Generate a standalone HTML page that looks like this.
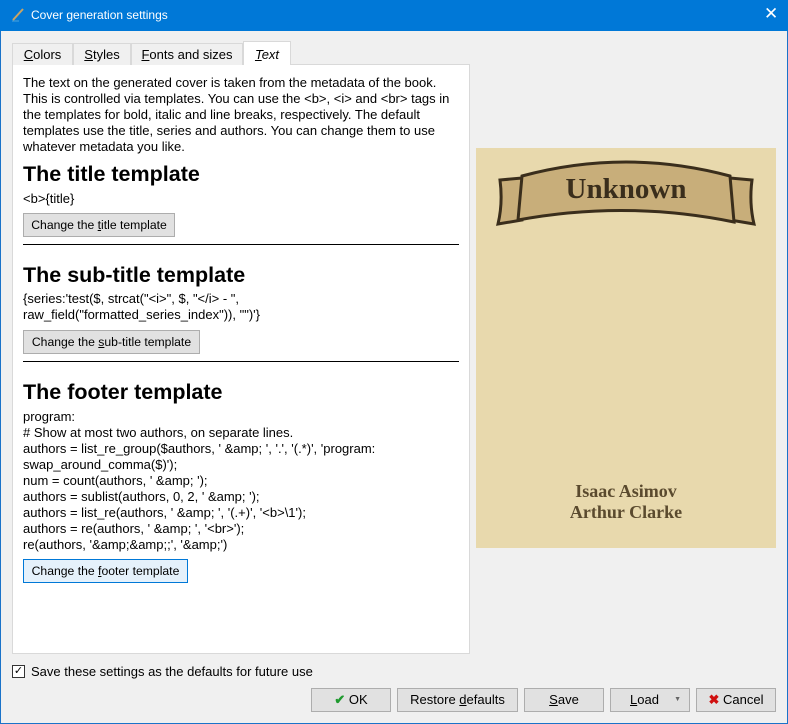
<!DOCTYPE html>
<html><head><meta charset="utf-8"><style>
*{margin:0;padding:0;box-sizing:border-box}
body{width:788px;height:724px;background:#f0f0f0;font-family:"Liberation Sans",sans-serif;font-size:12px;color:#000;position:relative;overflow:hidden}
.win{position:absolute;left:0;top:0;width:788px;height:724px;border:1px solid #1a73c9}
.title{position:absolute;left:0;top:0;width:788px;height:31px;background:#0078d7;color:#fff;font-size:12px}
.a{position:absolute;white-space:nowrap}
.l{position:absolute;left:23px;white-space:nowrap;line-height:16px;font-size:13px}
.h{position:absolute;left:23px;font-weight:bold;font-size:21.5px;white-space:nowrap;line-height:24px}
.btn{position:absolute;height:24px;border:1px solid #adadad;background:#e1e1e1;text-align:center;line-height:22px;font-size:13px;white-space:nowrap}
.cb{font-size:12.2px}
.tab{position:absolute;top:43px;height:22px;border:1px solid #d9d9d9;border-bottom:none;background:#f0f0f0;text-align:center;line-height:22px;font-size:13px}
.hr{position:absolute;left:23px;width:436px;height:1px;background:#000}
</style></head><body>
<div class="win"></div>
<div class="title">
<svg class="a" style="left:10px;top:7px" width="16" height="16"><line x1="3" y1="13" x2="13" y2="2" stroke="#c9a464" stroke-width="2"/><line x1="2" y1="14" x2="9" y2="14" stroke="#4aa3df" stroke-width="1"/></svg>
<div class="a" style="left:31px;top:8px">Cover generation settings</div>
<div class="a" style="left:764px;top:4px;font-size:17px">✕</div>
</div>
<div class="a" style="left:12px;top:64px;width:458px;height:590px;border:1px solid #d9d9d9;background:#fff"></div>
<div class="tab" style="left:12px;width:61px"><u>C</u>olors</div>
<div class="tab" style="left:73px;width:58px"><u>S</u>tyles</div>
<div class="tab" style="left:131px;width:112px"><u>F</u>onts and sizes</div>
<div class="tab" style="left:243px;top:41px;height:24px;width:48px;background:#fff;font-style:italic;line-height:26px"><u>T</u>ext</div>

<div class="l" style="top:75px">The text on the generated cover is taken from the metadata of the book.</div>
<div class="l" style="top:91px">This is controlled via templates. You can use the &lt;b&gt;, &lt;i&gt; and &lt;br&gt; tags in</div>
<div class="l" style="top:107px">the templates for bold, italic and line breaks, respectively. The default</div>
<div class="l" style="top:123px">templates use the title, series and authors. You can change them to use</div>
<div class="l" style="top:139px">whatever metadata you like.</div>
<div class="h" style="top:162px">The title template</div>
<div class="l" style="top:191px">&lt;b&gt;{title}</div>
<div class="btn cb" style="left:23px;top:213px;width:152px">Change the <u>t</u>itle template</div>
<div class="hr" style="top:244px"></div>
<div class="h" style="top:263px">The sub-title template</div>
<div class="l" style="top:291px">{series:'test($, strcat("&lt;i&gt;", $, "&lt;/i&gt; - ",</div>
<div class="l" style="top:307px">raw_field("formatted_series_index")), "")'}</div>
<div class="btn cb" style="left:23px;top:330px;width:177px">Change the <u>s</u>ub-title template</div>
<div class="hr" style="top:361px"></div>
<div class="h" style="top:380px">The footer template</div>
<div class="l" style="top:409px">program:</div>
<div class="l" style="top:425px"># Show at most two authors, on separate lines.</div>
<div class="l" style="top:441px">authors = list_re_group($authors, ' &amp;amp; ', '.', '(.*)', 'program:</div>
<div class="l" style="top:457px">swap_around_comma($)');</div>
<div class="l" style="top:473px">num = count(authors, ' &amp;amp; ');</div>
<div class="l" style="top:489px">authors = sublist(authors, 0, 2, ' &amp;amp; ');</div>
<div class="l" style="top:505px">authors = list_re(authors, ' &amp;amp; ', '(.+)', '&lt;b&gt;\1');</div>
<div class="l" style="top:521px">authors = re(authors, ' &amp;amp; ', '&lt;br&gt;');</div>
<div class="l" style="top:537px">re(authors, '&amp;amp;&amp;amp;;', '&amp;amp;')</div>
<div class="btn cb" style="left:23px;top:559px;width:165px;border-color:#0078d7;background:#e5f1fb">Change the <u>f</u>ooter template</div>

<div class="a" style="left:476px;top:148px;width:300px;height:400px;background:#e8d9ad">
<svg width="300" height="100" style="position:absolute;left:0;top:0">
<path d="M24 32 L46 30 L46 72 L22 76 Q27 55 24 32Z" fill="#c8ae7a" stroke="#3a2e1c" stroke-width="3"/>
<path d="M276 32 L254 30 L254 72 L278 76 Q273 55 276 32Z" fill="#c8ae7a" stroke="#3a2e1c" stroke-width="3"/>
<path d="M46 28 Q150 0 254 28 L258 74 Q150 52 42 72 Z" fill="#c8ae7a" stroke="#3a2e1c" stroke-width="3"/>
</svg>
<div class="a" style="left:0;width:300px;top:25px;text-align:center;font-family:'Liberation Serif',serif;font-weight:bold;font-size:29px;color:#3a2e1c">Unknown</div>
<div class="a" style="left:0;width:300px;top:333px;text-align:center;font-family:'Liberation Serif',serif;font-weight:bold;font-size:18px;line-height:21px;color:#5a4a2e">Isaac Asimov<br>Arthur Clarke</div>
</div>

<div class="a" style="left:12px;top:665px;width:13px;height:13px;border:1px solid #333;background:#fff;font-size:11px;line-height:11px;text-align:center">✓</div>
<div class="a" style="left:31px;top:664px;font-size:13px">Save these settings as the defaults for future use</div>
<div class="btn" style="left:311px;top:688px;width:80px"><span style="color:#1f9a2f;font-weight:bold">✔</span> OK</div>
<div class="btn" style="left:397px;top:688px;width:121px">Restore <u>d</u>efaults</div>
<div class="btn" style="left:524px;top:688px;width:80px"><u>S</u>ave</div>
<div class="btn" style="left:610px;top:688px;width:80px;text-align:left;padding-left:19px"><u>L</u>oad<span style="position:absolute;right:8px;font-size:7px;color:#666">▼</span></div>
<div class="btn" style="left:696px;top:688px;width:80px"><span style="color:#d01010;font-weight:bold">✖</span> Cancel</div>
</body></html>
